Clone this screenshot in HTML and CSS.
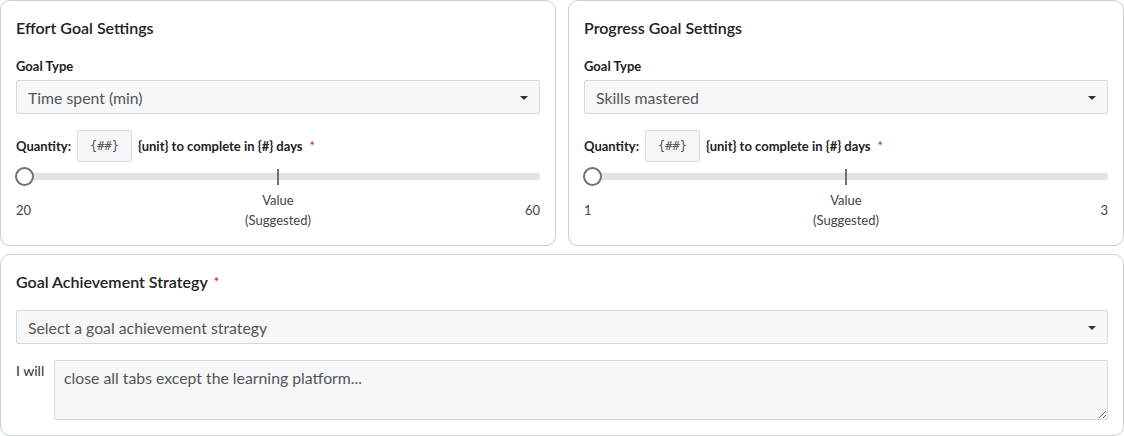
FILE: index.html
```html
<!DOCTYPE html>
<html lang="en">
<head>
  <meta charset="UTF-8" />
  <meta name="viewport" content="width=device-width, initial-scale=1.0" />
  <title>Goal Settings</title>
  <link rel="stylesheet" href="styles.css">
</head>
<body>
  <div class="goals">
    <div class="card">
      <h2 class="card-title">Effort Goal Settings</h2>
      <label class="field-label" for="effortType">Goal Type</label>
      <div class="select-wrap">
        <select id="effortType" class="select">
          <option>Time spent (min)</option>
        </select>
      </div>
      <div class="quantity">
        <span class="q-label">Quantity:</span>
        <input class="q-input" type="text" placeholder="{##}">
        <span class="q-text">{unit} to complete in {#} days</span>
        <span class="req">*</span>
      </div>
      <div class="slider">
        <div class="track"></div>
        <div class="tick"></div>
        <div class="thumb"></div>
      </div>
      <div class="scale">
        <span>20</span>
        <span class="mid">Value<br>(Suggested)</span>
        <span class="end">60</span>
      </div>
    </div>

    <div class="card">
      <h2 class="card-title">Progress Goal Settings</h2>
      <label class="field-label" for="progressType">Goal Type</label>
      <div class="select-wrap">
        <select id="progressType" class="select">
          <option>Skills mastered</option>
        </select>
      </div>
      <div class="quantity">
        <span class="q-label">Quantity:</span>
        <input class="q-input" type="text" placeholder="{##}">
        <span class="q-text">{unit} to complete in {#} days</span>
        <span class="req">*</span>
      </div>
      <div class="slider">
        <div class="track"></div>
        <div class="tick"></div>
        <div class="thumb"></div>
      </div>
      <div class="scale">
        <span>1</span>
        <span class="mid">Value<br>(Suggested)</span>
        <span class="end">3</span>
      </div>
    </div>

    <div class="card wide">
      <h2 class="card-title">Goal Achievement Strategy <span class="req">*</span></h2>
      <div class="select-wrap strategy">
        <select class="select">
          <option>Select a goal achievement strategy</option>
        </select>
      </div>
      <div class="will">
        <label class="will-label" for="willText">I will</label>
        <textarea id="willText" class="textarea" placeholder="close all tabs except the learning platform..."></textarea>
      </div>
    </div>
  </div>
</body>
</html>
```

FILE: styles.css
```css
* { box-sizing: border-box; }
body { margin: 0; font-family: Lato, "Open Sans", sans-serif; color: #222; background: #fff; }

.goals { display: grid; grid-template-columns: 1fr 1fr; column-gap: 12px; row-gap: 8px; width: 1124px; }
.card { border: 1px solid #c9cfd2; border-radius: 10px; padding: 17px 15px 15px; background: #fff; }
.card.wide { grid-column: 1 / 3; }

.card-title { margin: 0; font-size: 16px; line-height: 20px; font-weight: 600; color: #222; }
.field-label { display: block; margin: 20px 0 6px; font-size: 13px; line-height: 16px; font-weight: 700; color: #222; }

.select-wrap { position: relative; }
.select-wrap::after { content: ""; position: absolute; right: 12px; top: 16px; border-left: 4px solid transparent; border-right: 4px solid transparent; border-top: 4px solid #333; pointer-events: none; }
.select-wrap.strategy { margin-top: 18px; }
.select { appearance: none; -webkit-appearance: none; width: 100%; height: 34px; padding: 0 30px 0 11px; border: 1px solid #d4d7db; border-radius: 2px; background: #f6f7f9; font-family: inherit; font-size: 15.8px; color: #555; }

.quantity { display: flex; align-items: center; margin-top: 16px; font-size: 13px; font-weight: 700; color: #222; }
.q-input { width: 55px; height: 32px; margin: 0 6px 0 6px; border: 1px solid #d9dcdf; border-radius: 2px; background: #f6f7f9; text-align: center; font-family: "DejaVu Sans Mono", monospace; font-size: 12px; }
.q-input::placeholder { color: #555; }
.req { margin-left: 7px; color: #c62828; font-weight: 400; }
.card-title .req { margin-left: 2px; font-size: 14px; vertical-align: top; }

.slider { position: relative; height: 20px; margin-top: 5px; }
.track { position: absolute; left: 0; right: 0; top: 6px; height: 7px; border-radius: 4px; background: #e2e2e2; }
.tick { position: absolute; left: 50%; top: 2px; width: 2px; height: 16px; margin-left: -1px; background: #6b7575; }
.thumb { position: absolute; left: -1px; top: 0; width: 19px; height: 19px; border: 2px solid #6b7575; border-radius: 50%; background: #fff; }

.scale { display: grid; grid-template-columns: 1fr auto 1fr; align-items: center; margin-top: 3px; font-size: 13px; line-height: 20px; color: #444; }
.scale .mid { text-align: center; }
.scale .end { text-align: right; }

.will { display: flex; align-items: flex-start; margin-top: 16px; }
.will-label { width: 38px; padding-top: 2px; font-size: 14px; line-height: 18px; color: #333; }
.textarea { flex: 1; height: 60px; padding: 7px 9px; border: 1px solid #d4d7db; border-radius: 2px; background: #f6f7f9; font-family: inherit; font-size: 15.8px; line-height: 20px; }
.textarea::placeholder { color: #555; }
```
